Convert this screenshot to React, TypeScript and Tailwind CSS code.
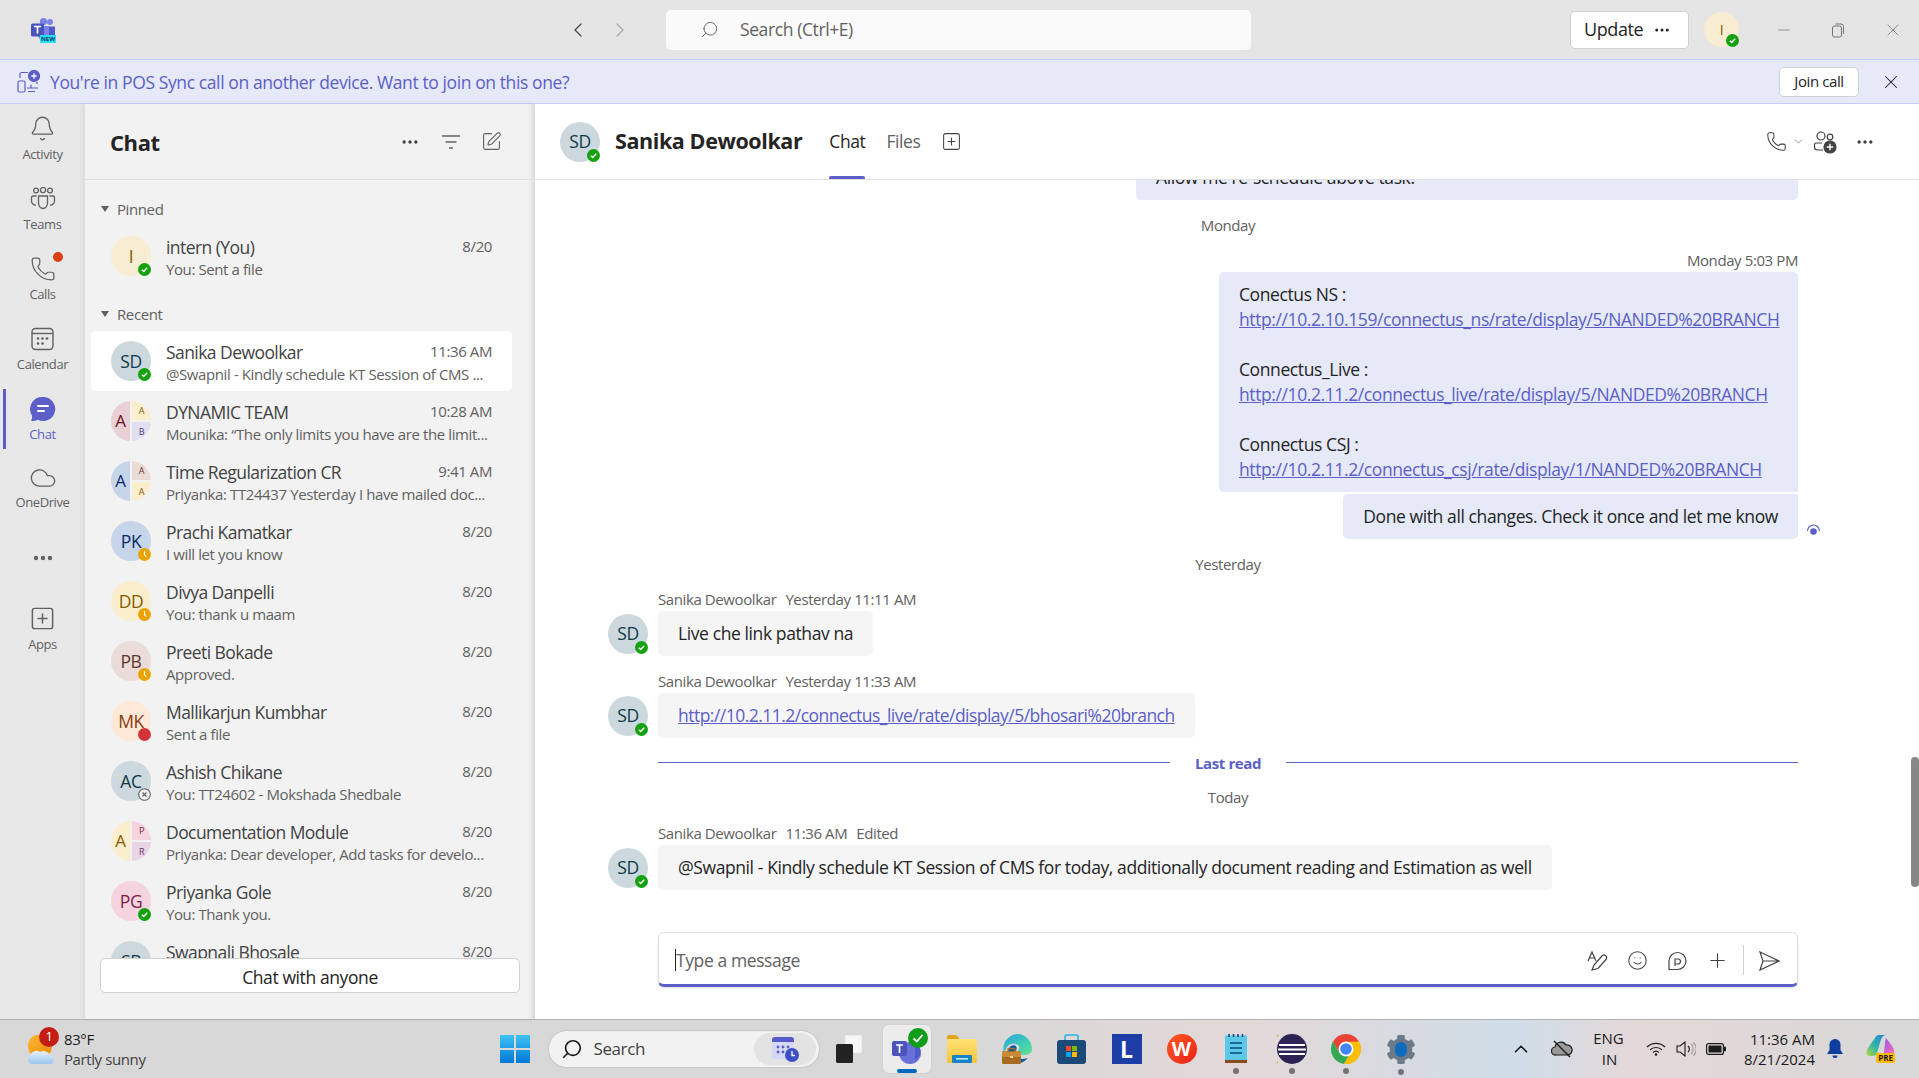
import { Bell, Phone, Cloud, SquarePlus, SquarePen, MoreHorizontal, Search, X, Minus, ChevronLeft, ChevronRight, ChevronDown, ChevronUp, Smile, Plus } from "lucide-react";
import { FaCog } from "react-icons/fa";
import type { ReactNode } from "react";

function Status({ kind, size = "w-[13px] h-[13px]" }: { kind: string; size?: string }) {
  return (
    <svg viewBox="0 0 13 13" className={`absolute right-0 bottom-0 ${size}`}>
      {kind === "ok" && (
        <>
          <circle cx="6.5" cy="6.5" r="6.5" fill="#13a10e" />
          <path d="M3.8 6.7 L5.7 8.5 L9.2 4.8" fill="none" stroke="#fff" strokeWidth="1.4" />
        </>
      )}
      {kind === "away" && (
        <>
          <circle cx="6.5" cy="6.5" r="6.5" fill="#eaa300" />
          <path d="M6.5 3 V6.8 L8.3 8.6" fill="none" stroke="#fff" strokeWidth="1.2" />
        </>
      )}
      {kind === "busy" && <circle cx="6.5" cy="6.5" r="6.5" fill="#d13438" />}
      {kind === "off" && (
        <>
          <circle cx="6.5" cy="6.5" r="5.8" fill="#f2f2f2" stroke="#616161" strokeWidth="1.1" />
          <path d="M4.5 4.5 L8.5 8.5 M8.5 4.5 L4.5 8.5" stroke="#616161" strokeWidth="1.1" />
        </>
      )}
    </svg>
  );
}

function Avatar({ text, bg, fg, status }: { text: string; bg: string; fg: string; status: string }) {
  return (
    <div className={`relative w-10 h-10 shrink-0 rounded-full flex items-center justify-center text-[17.5px] font-medium ${bg} ${fg}`}>
      {text}
      <Status kind={status} />
    </div>
  );
}

function GroupAvatar({ a, aBg, aFg, b, bBg, bFg, c, cBg, cFg }: { a: string; aBg: string; aFg: string; b: string; bBg: string; bFg: string; c: string; cBg: string; cFg: string }) {
  return (
    <div className="w-10 h-10 shrink-0 rounded-full overflow-hidden flex gap-[2px]">
      <div className={`w-[19px] flex items-center justify-center text-[17px] font-medium ${aBg} ${aFg}`}>{a}</div>
      <div className="w-[19px] flex flex-col gap-[2px]">
        <div className={`h-[19px] flex items-center justify-center text-[9px] ${bBg} ${bFg}`}>{b}</div>
        <div className={`h-[19px] flex items-center justify-center text-[9px] ${cBg} ${cFg}`}>{c}</div>
      </div>
    </div>
  );
}

const SD = () => <Avatar text="SD" bg="bg-[#ccd8de]" fg="text-[#0f3a48]" status="ok" />;

const rows: { name: string; sub: string; time: string; av: ReactNode; sel?: boolean }[] = [
  { name: "Sanika Dewoolkar", sub: "@Swapnil - Kindly schedule KT Session of CMS ...", time: "11:36 AM", av: <SD />, sel: true },
  { name: "DYNAMIC TEAM", sub: "Mounika: “The only limits you have are the limit...", time: "10:28 AM", av: <GroupAvatar a="A" aBg="bg-[#e8d0d4]" aFg="text-[#6b1020]" b="A" bBg="bg-[#fbeecd]" bFg="text-[#835b00]" c="B" cBg="bg-[#e2dff0]" cFg="text-[#4b3f8a]" /> },
  { name: "Time Regularization CR", sub: "Priyanka: TT24437 Yesterday I have mailed doc...", time: "9:41 AM", av: <GroupAvatar a="A" aBg="bg-[#c7d5ea]" aFg="text-[#0b2a6b]" b="A" bBg="bg-[#ecdcd8]" bFg="text-[#63352a]" c="A" cBg="bg-[#fbeecd]" cFg="text-[#835b00]" /> },
  { name: "Prachi Kamatkar", sub: "I will let you know", time: "8/20", av: <Avatar text="PK" bg="bg-[#c7d5ea]" fg="text-[#0b2a6b]" status="away" /> },
  { name: "Divya Danpelli", sub: "You: thank u maam", time: "8/20", av: <Avatar text="DD" bg="bg-[#fbeecd]" fg="text-[#835b00]" status="away" /> },
  { name: "Preeti Bokade", sub: "Approved.", time: "8/20", av: <Avatar text="PB" bg="bg-[#eadcd8]" fg="text-[#63352a]" status="away" /> },
  { name: "Mallikarjun Kumbhar", sub: "Sent a file", time: "8/20", av: <Avatar text="MK" bg="bg-[#fde9d5]" fg="text-[#8a3a10]" status="busy" /> },
  { name: "Ashish Chikane", sub: "You: TT24602 - Mokshada Shedbale", time: "8/20", av: <Avatar text="AC" bg="bg-[#cdd9de]" fg="text-[#0f3a48]" status="off" /> },
  { name: "Documentation Module", sub: "Priyanka: Dear developer, Add tasks for develo...", time: "8/20", av: <GroupAvatar a="A" aBg="bg-[#fbeecd]" aFg="text-[#835b00]" b="P" bBg="bg-[#f5d4e0]" bFg="text-[#7d1d45]" c="R" cBg="bg-[#e8d5e5]" cFg="text-[#6b2a66]" /> },
  { name: "Priyanka Gole", sub: "You: Thank you.", time: "8/20", av: <Avatar text="PG" bg="bg-[#f5d4e0]" fg="text-[#7d1d45]" status="ok" /> },
  { name: "Swapnali Bhosale", sub: "", time: "8/20", av: <Avatar text="SB" bg="bg-[#ccd8de]" fg="text-[#0f3a48]" status="ok" /> },
];

function Row({ name, sub, time, av, sel }: { name: string; sub: string; time: string; av: ReactNode; sel?: boolean }) {
  return (
    <div className={`ml-[6px] mr-[23px] h-[60px] shrink-0 flex items-start gap-[15px] pl-5 pr-5 pt-[10px] rounded-[5px] ${sel ? "bg-white" : ""}`}>
      {av}
      <div className="flex-1 min-w-0">
        <div className="flex justify-between h-6 leading-[22px] text-[17.5px] text-[#424242] whitespace-nowrap">
          <span className="tracking-[-0.032em]">{name}</span>
          <span className="text-[15px] text-[#616161] -mt-[1px]">{time}</span>
        </div>
        <div className="h-5 leading-[18px] text-[15px] text-[#616161] whitespace-nowrap">{sub}</div>
      </div>
    </div>
  );
}

function RailItem({ icon, label, active, labelGap = "mt-[6px]" }: { icon: ReactNode; label: string; active?: boolean; labelGap?: string }) {
  return (
    <div className="relative h-[70px] flex flex-col items-center">
      {active && <div className="absolute left-[3px] -top-[7px] w-[3px] h-[60px] bg-[#5b5fc7]" />}
      <div className="h-6 flex items-center justify-center">{icon}</div>
      <div className={`${labelGap} h-4 leading-4 text-[13px] ${active ? "text-[#5b5fc7]" : "text-[#616161]"}`}>{label}</div>
    </div>
  );
}

const TeamsRail = () => (
  <svg width="26" height="24" viewBox="0 0 26 24" fill="none" stroke="#616161" strokeWidth="1.3" className="mt-[2px]">
    <circle cx="6" cy="3.5" r="2.4" />
    <circle cx="13" cy="3" r="2.6" />
    <circle cx="20" cy="3.5" r="2.4" />
    <path d="M8.5 9 H17.5 V16 A4.5 5.5 0 0 1 8.5 16 Z" />
    <path d="M6.5 9 H3 A1.5 1.5 0 0 0 1.5 10.5 V14 A4 4 0 0 0 6 18" />
    <path d="M19.5 9 H23 A1.5 1.5 0 0 1 24.5 10.5 V14 A4 4 0 0 1 20 18" />
  </svg>
);

const CalendarIcon = () => (
  <svg width="23" height="24" viewBox="0 0 23 24" fill="none" stroke="#616161" strokeWidth="1.4" className="mt-[1px]">
    <rect x="1" y="1.5" width="21" height="21" rx="3.5" />
    <path d="M1 6.5 H22" />
    <g fill="#616161" stroke="none">
      <circle cx="7" cy="11.5" r="1.3" /><circle cx="11.5" cy="11.5" r="1.3" /><circle cx="16" cy="11.5" r="1.3" />
      <circle cx="7" cy="16.5" r="1.3" /><circle cx="11.5" cy="16.5" r="1.3" />
    </g>
  </svg>
);

const ChatIcon = () => (
  <svg width="26" height="26" viewBox="0 0 26 26" className="mt-[1px]">
    <path d="M13 1 A12 12 0 1 1 8 23.8 C5.5 25 3 25.2 1 25 C2 23.5 2.2 21 2 19.4 A12 12 0 0 1 13 1 Z" fill="#5b5fc7" />
    <path d="M8 10 H18 M8 15 H14" stroke="#fff" strokeWidth="2" strokeLinecap="round" />
  </svg>
);

const TeamsLogo = () => (
  <svg width="26" height="24" viewBox="0 0 26 24">
    <circle cx="20" cy="5" r="3" fill="#7b83eb" />
    <circle cx="13.5" cy="4.5" r="3.6" fill="#7b83eb" />
    <path d="M17 9.5 H25 V17 A4 4 0 0 1 17 17 Z" fill="#5059c9" />
    <path d="M8 9 H19 V18 A5.5 5.5 0 0 1 8 18 Z" fill="#7b83eb" />
    <rect x="1" y="6.5" width="13" height="13" rx="1.5" fill="#4b53bc" />
    <path d="M4 9.5 H11 M7.5 9.5 V16.5" stroke="#fff" strokeWidth="1.7" />
  </svg>
);

function Bubble({ children, className = "" }: { children: ReactNode; className?: string }) {
  return <div className={`px-5 py-[10px] leading-[25px] text-[17.5px] text-[#242424] rounded-[5px] whitespace-nowrap ${className}`}>{children}</div>;
}

const Link = ({ children, className = "" }: { children: ReactNode; className?: string }) => <span className={`text-[#5b5fc7] underline ${className}`}>{children}</span>;

function Sender({ time, edited, cls }: { time: string; edited?: boolean; cls: string }) {
  return (
    <div className={`pl-[50px] h-5 leading-[18px] text-[15px] text-[#616161] flex gap-[9px] whitespace-nowrap ${cls}`}>
      <span>Sanika Dewoolkar</span>
      <span>{time}</span>
      {edited && <span>Edited</span>}
    </div>
  );
}

function Incoming({ children }: { children: ReactNode }) {
  return (
    <div className="flex items-center gap-[10px] mt-[1px]">
      <SD />
      <Bubble className="bg-[#f5f5f5]">{children}</Bubble>
    </div>
  );
}

const DateLine = ({ text, cls }: { text: string; cls: string }) => (
  <div className={`pl-[50px] h-5 leading-[18px] text-center text-[15px] text-[#616161] ${cls}`}>{text}</div>
);

export default function App() {
  return (
    <div className="w-[1919px] h-[1078px] overflow-hidden flex flex-col bg-white tracking-[-0.025em] font-['Open_Sans','Noto_Sans',sans-serif]">
      {/* title bar */}
      <div className="h-[59px] shrink-0 bg-[#e5e5e5] flex items-center pl-[30px]">
        <div className="relative w-[26px] h-[24px] -mt-[1px]">
          <TeamsLogo />
          <span className="absolute right-0 -bottom-[2px] bg-[#27e0f0] text-[#0b3a6b] text-[6px] leading-[8px] font-bold px-[1px] tracking-normal">NEW</span>
        </div>
        <ChevronLeft className="ml-[510px] text-[#424242]" size={24} strokeWidth={1.2} />
        <ChevronRight className="ml-[18px] text-[#a8a8a8]" size={24} strokeWidth={1.2} />
        <div className="ml-[34px] w-[585px] h-10 bg-[#fafafa] rounded-[5px] flex items-center pl-[34px] text-[17.5px] text-[#616161]">
          <Search size={19} strokeWidth={1.2} className="scale-x-[-1]" />
          <span className="ml-[21px]">Search (Ctrl+E)</span>
        </div>
        <div className="ml-[319px] w-[119px] h-[38px] bg-white border border-[#d1d1d1] rounded-[5px] flex items-center pl-[13px] text-[18px] text-[#242424] font-medium">
          Update
          <MoreHorizontal size={18} strokeWidth={2} className="ml-[10px]" />
        </div>
        <div className="relative ml-[15px] w-[35px] h-[35px] rounded-full bg-[#f8ecd3] text-[#835b00] text-[14px] flex items-center justify-center">
          I
          <Status kind="ok" />
        </div>
        <Minus className="ml-[36px] text-[#757575]" size={18} strokeWidth={1} />
        <svg className="ml-[37px]" width="16" height="16" viewBox="0 0 16 16" fill="none" stroke="#757575" strokeWidth="1">
          <rect x="2.5" y="4" width="9" height="11" rx="2" />
          <path d="M5.5 2 H11 A2.5 2.5 0 0 1 13.5 4.5 V12" />
        </svg>
        <X className="ml-[37px] text-[#757575]" size={20} strokeWidth={1} />
      </div>

      {/* banner */}
      <div className="h-[45px] shrink-0 bg-[#e6e9f8] border-y border-[#c5cbfa] flex items-center pl-[17px]">
        <svg width="23" height="23" viewBox="0 0 23 23" fill="none" stroke="#5b5fc7" strokeWidth="1.2">
          <rect x="1" y="11" width="7" height="11" rx="1.5" />
          <path d="M3 8 V4 A1.5 1.5 0 0 1 4.5 2.5 H11 M10 18 H21 M14 14.5 V18 M11 21.5 H18 M20 12 V14" />
          <circle cx="17" cy="6" r="5.5" fill="#5b5fc7" />
          <path d="M17 3.3 V8.7 M14.3 6 H19.7" stroke="#fff" strokeWidth="1.3" />
        </svg>
        <span className="ml-[10px] pt-[2px] text-[17.5px] text-[#5b5fc7]">You're in POS Sync call on another device. Want to join on this one?</span>
        <div className="ml-auto w-[80px] h-[30px] bg-white border border-[#d1d1d1] rounded-[5px] flex items-center justify-center text-[15px] text-[#242424]">Join call</div>
        <X className="ml-[21px] mr-[17px] text-[#242424]" size={22} strokeWidth={1.1} />
      </div>

      {/* body */}
      <div className="flex-1 min-h-0 flex">
        {/* rail */}
        <div className="w-[85px] shrink-0 bg-[#e8e8e8] pt-3">
          <RailItem label="Activity" icon={<Bell size={27} strokeWidth={1.15} className="text-[#616161]" />} />
          <RailItem label="Teams" icon={<TeamsRail />} />
          <div className="relative">
            <RailItem label="Calls" icon={<Phone size={26} strokeWidth={1.15} className="text-[#616161] mt-[1px]" />} />
            <div className="absolute left-[53px] -top-[4px] w-[10px] h-[10px] rounded-full bg-[#dc3f14]" />
          </div>
          <RailItem label="Calendar" icon={<CalendarIcon />} />
          <RailItem label="Chat" active icon={<ChatIcon />} />
          <RailItem label="OneDrive" labelGap="mt-[4px]" icon={<Cloud size={28} strokeWidth={1.15} className="text-[#616161]" />} />
          <div className="h-[44px] flex items-center justify-center">
            <MoreHorizontal size={24} strokeWidth={2.4} className="text-[#616161]" />
          </div>
          <div className="mt-[26px]">
            <RailItem label="Apps" icon={<SquarePlus size={27} strokeWidth={1.3} className="text-[#616161]" />} />
          </div>
        </div>

        {/* chat list */}
        <div className="relative w-[450px] shrink-0 bg-[#f2f2f2] flex flex-col shadow-[inset_-7px_0_6px_-5px_rgba(0,0,0,0.14),-3px_0_4px_rgba(0,0,0,0.05)]">
          <div className="h-[76px] shrink-0 border-b border-[#e0e0e0] flex items-center pl-[25px]">
            <span className="text-[22px] font-bold text-[#242424] pt-[1px]">Chat</span>
            <MoreHorizontal className="ml-[240px] text-[#424242]" size={20} strokeWidth={2} />
            <svg className="ml-[21px]" width="20" height="16" viewBox="0 0 20 16" fill="none" stroke="#616161" strokeWidth="1.3">
              <path d="M1 2 H19 M4.5 8 H15.5 M8 14 H12" />
            </svg>
            <SquarePen className="ml-[20px] text-[#616161]" size={21} strokeWidth={1.25} />
          </div>
          <div className="flex-1 min-h-0 overflow-hidden flex flex-col">
            <div className="mt-5 h-5 shrink-0 pl-4 pb-[2px] flex items-center text-[15px] text-[#616161]">
              <span className="w-0 h-0 border-x-[4px] border-x-transparent border-t-[6px] border-t-[#616161]" />
              <span className="ml-2">Pinned</span>
            </div>
            <div className="mt-[6px]">
              <Row name="intern (You)" sub="You: Sent a file" time="8/20" av={<Avatar text="I" bg="bg-[#f8ecd3]" fg="text-[#835b00]" status="ok" />} />
            </div>
            <div className="mt-[19px] h-5 shrink-0 pl-4 pb-[2px] flex items-center text-[15px] text-[#616161]">
              <span className="w-0 h-0 border-x-[4px] border-x-transparent border-t-[6px] border-t-[#616161]" />
              <span className="ml-2">Recent</span>
            </div>
            <div className="mt-[6px]">
              {rows.map((r) => (
                <Row key={r.name} {...r} />
              ))}
            </div>
          </div>
          <div className="mx-[15px] mb-[26px] h-[35px] pt-[3px] shrink-0 bg-white border border-[#d1d1d1] rounded-[5px] flex items-center justify-center text-[17.5px] font-medium text-[#242424]">
            Chat with anyone
          </div>
        </div>

        {/* main */}
        <div className="relative flex-1 min-w-0 flex flex-col bg-white">
          <div className="relative z-10 h-[76px] shrink-0 bg-white border-b border-[#e0e0e0] flex items-center pl-[25px]">
            <SD />
            <span className="ml-[15px] text-[21.5px] font-bold text-[#242424]">Sanika Dewoolkar</span>
            <div className="relative ml-[27px] h-full flex items-center text-[17.5px] font-medium text-[#242424]">
              Chat
              <div className="absolute left-0 right-0 bottom-0 h-[3px] rounded-t-[2px] bg-[#5b5fc7]" />
            </div>
            <span className="ml-[21px] text-[17.5px] text-[#616161]">Files</span>
            <SquarePlus className="ml-[21px] text-[#424242]" size={21} strokeWidth={1.2} />
            <Phone className="ml-auto text-[#424242]" size={21} strokeWidth={1.2} />
            <ChevronDown className="ml-[5px] text-[#616161]" size={13} strokeWidth={1.2} />
            <svg className="ml-[8px]" width="24" height="24" viewBox="0 0 24 24" fill="none" stroke="#424242" strokeWidth="1.2">
              <circle cx="8" cy="6" r="4" />
              <circle cx="17" cy="7" r="2.8" />
              <path d="M9 13 H3 A1.5 1.5 0 0 0 1.5 14.5 V17 A3 3 0 0 0 4.5 20 H10" />
              <circle cx="17" cy="17" r="6" fill="#424242" />
              <path d="M17 13.8 V20.2 M13.8 17 H20.2" stroke="#fff" strokeWidth="1.4" />
            </svg>
            <MoreHorizontal className="ml-[18px] mr-[44px] text-[#424242]" size={20} strokeWidth={2} />
          </div>
          <div className="flex-1 min-h-0 flex flex-col ml-[73px] mr-[121px]">
            <Bubble className="ml-[528px] -mt-[25px] bg-[#e6e9f8]">Allow me re-schedule above task.</Bubble>
            <DateLine text="Monday" cls="mt-4" />
            <div className="mt-[15px] h-5 leading-[18px] text-right text-[15px] text-[#616161]">Monday 5:03 PM</div>
            <div className="flex justify-end mt-[1px]">
              <Bubble className="bg-[#e6e9f8] w-[579px] rounded-br-none">
                <div>Conectus NS :</div>
                <Link>http://10.2.10.159/connectus_ns/rate/display/5/NANDED%20BRANCH</Link>
                <div className="h-[25px]" />
                <div>Connectus_Live :</div>
                <Link>http://10.2.11.2/connectus_live/rate/display/5/NANDED%20BRANCH</Link>
                <div className="h-[25px]" />
                <div>Connectus CSJ :</div>
                <Link>http://10.2.11.2/connectus_csj/rate/display/1/NANDED%20BRANCH</Link>
              </Bubble>
            </div>
            <div className="relative flex justify-end mt-[2px]">
              <Bubble className="bg-[#e6e9f8] rounded-tr-none">Done with all changes. Check it once and let me know</Bubble>
              <svg className="absolute -right-[23px] top-[30px]" width="15" height="13" viewBox="0 0 15 13" fill="none">
                <circle cx="7.5" cy="7.5" r="3.3" fill="#5b5fc7" />
                <path d="M1.5 7 A6 6 0 0 1 13.5 7" stroke="#5b5fc7" strokeWidth="1.2" />
              </svg>
            </div>
            <DateLine text="Yesterday" cls="mt-4" />
            <Sender time="Yesterday 11:11 AM" cls="mt-[15px]" />
            <Incoming>Live che link pathav na</Incoming>
            <Sender time="Yesterday 11:33 AM" cls="mt-4" />
            <Incoming>
              <Link className="tracking-[-0.03em]">http://10.2.11.2/connectus_live/rate/display/5/bhosari%20branch</Link>
            </Incoming>
            <div className="mt-[14px] h-5 pl-[50px] flex items-center gap-[25px]">
              <div className="flex-1 h-px bg-[#5b5fc7]" />
              <span className="text-[15px] font-bold text-[#5b5fc7] pt-[2px]">Last read</span>
              <div className="flex-1 h-px bg-[#5b5fc7]" />
            </div>
            <DateLine text="Today" cls="mt-[16px]" />
            <Sender time="11:36 AM" edited cls="mt-[16px]" />
            <Incoming>
              <span className="tracking-[-0.023em]">@Swapnil - Kindly schedule KT Session of CMS for today, additionally document reading and Estimation as well</span>
            </Incoming>
            {/* composer */}
            <div className="ml-[50px] mt-[42px] h-[55px] bg-white border border-[#e0e0e0] border-b-[3px] border-b-[#5b5fc7] rounded-[6px] shadow-sm flex items-center pl-4 pr-[17px] text-[17.5px] text-[#616161]">
              <div className="w-px h-[22px] bg-[#242424] mt-[2px]" />
              <span className="pt-[3px]">Type a message</span>
              <svg className="ml-auto mt-[4px]" width="22" height="22" viewBox="0 0 22 22" fill="none" stroke="#424242" strokeWidth="1.2">
                <path d="M1 11 L5 2 L9 11 M2.5 8 H7.5" />
                <path d="M5 20 L7 15 L15 6 A2 2 0 0 1 19 9.5 L11 18.5 Z" />
              </svg>
              <Smile className="ml-[18px] mt-[4px] text-[#424242]" size={21} strokeWidth={1.2} />
              <svg className="ml-[19px] mt-[4px]" width="20" height="20" viewBox="0 0 20 20" fill="none" stroke="#424242" strokeWidth="1.2">
                <path d="M2 19 V10 A8.5 8.5 0 1 1 10.5 18.5 H2" />
                <path d="M8 15 V8 H11 A2.5 2.5 0 0 1 11 13 H8" />
              </svg>
              <Plus className="ml-[19px] mt-[4px] text-[#424242]" size={23} strokeWidth={1.2} />
              <div className="ml-[14px] w-px h-[30px] bg-[#d1d1d1] mt-[2px]" />
              <svg className="ml-[14px] mt-[4px]" width="22" height="20" viewBox="0 0 22 20" fill="none" stroke="#424242" strokeWidth="1.2">
                <path d="M2 1 L21 10 L2 19 L5 10 Z M5 10 H21" />
              </svg>
            </div>
          </div>
          <div className="absolute right-0 top-[653px] w-2 h-[130px] rounded-full bg-[#868686]" />
        </div>
      </div>

      {/* taskbar */}
      <div className="h-[59px] shrink-0 border-t border-[#b3b3b3] bg-[linear-gradient(to_right,#d8d8d8_0%,#d8d8d8_50%,#e3d8d8_65%,#d3dce4_76%,#cfdde8_79%,#e4d8d8_85%,#d8d8d8_100%)] flex items-center text-[#1b1b1b]">
        <div className="relative ml-[27px] w-[30px] h-[30px] mt-[2px]">
          <svg width="30" height="30" viewBox="0 0 30 30">
            <defs>
              <linearGradient id="sun" x1="0" y1="0" x2="1" y2="1">
                <stop offset="0" stopColor="#fdb92e" />
                <stop offset="1" stopColor="#f08a12" />
              </linearGradient>
              <linearGradient id="cld" x1="0" y1="0" x2="0" y2="1">
                <stop offset="0" stopColor="#e8f2fc" />
                <stop offset="1" stopColor="#9cc4ee" />
              </linearGradient>
            </defs>
            <circle cx="13" cy="11" r="12" fill="url(#sun)" />
            <path d="M5 29 A4.5 4.5 0 0 1 3.5 20.5 A6 6 0 0 1 13 17 A7 7 0 0 1 23 20.5 A4.5 4.5 0 0 1 24 29 Z" fill="url(#cld)" />
          </svg>
          <div className="absolute left-[12px] -top-[8px] w-5 h-5 rounded-full bg-[#c41e12] text-white text-[13px] flex items-center justify-center">1</div>
        </div>
        <div className="ml-[7px] text-[15px] leading-5">
          <div>83°F</div>
          <div className="text-[#424242]">Partly sunny</div>
        </div>
        <svg className="ml-[354px]" width="30" height="30" viewBox="0 0 30 30">
          <defs>
            <linearGradient id="win" x1="0" y1="0" x2="0" y2="1">
              <stop offset="0" stopColor="#3ec1f3" />
              <stop offset="1" stopColor="#0078d4" />
            </linearGradient>
          </defs>
          <path d="M0 1 H14 V14 H0 Z M16 1 H30 V14 H16 Z M0 16 H14 V29 H0 Z M16 16 H30 V29 H16 Z" fill="url(#win)" />
        </svg>
        <div className="ml-[18px] w-[272px] h-[38px] rounded-full bg-[#f2f2f2] border border-[#c8c8c8] flex items-center pl-[12px] text-[17px] text-[#424242]">
          <Search size={22} strokeWidth={1.8} className="scale-x-[-1] text-[#1b1b1b]" />
          <span className="ml-[11px]">Search</span>
          <div className="ml-auto mr-[3px] w-[62px] h-[32px] rounded-full bg-[#e3e3e3] flex items-center justify-center">
            <svg width="30" height="28" viewBox="0 0 30 28">
              <rect x="2" y="2" width="22" height="22" rx="3" fill="#d5d8f5" />
              <path d="M2 5 A3 3 0 0 1 5 2 H21 A3 3 0 0 1 24 5 V7 H2 Z" fill="#5559c9" />
              <g fill="#5b5fc7"><circle cx="8" cy="12" r="1.4" /><circle cx="13" cy="12" r="1.4" /><circle cx="18" cy="12" r="1.4" /><circle cx="8" cy="17" r="1.4" /><circle cx="13" cy="17" r="1.4" /></g>
              <circle cx="22" cy="20" r="7" fill="#3d4fc4" />
              <path d="M22 16 V20.5 H25" stroke="#fff" strokeWidth="1.3" fill="none" />
            </svg>
          </div>
        </div>
        <svg className="ml-4" width="26" height="28" viewBox="0 0 26 28">
          <rect x="9" y="0" width="17" height="18" rx="1.5" fill="#f6f6f6" stroke="#e4e4e4" />
          <rect x="0" y="9" width="17" height="19" rx="1.5" fill="#222" />
        </svg>
        <div className="relative ml-[21px] w-[48px] h-[48px] rounded-[5px] bg-[#ececec] shadow-[0_0_1px_rgba(0,0,0,0.3)]">
          <svg className="absolute left-[8px] top-[14px]" width="32" height="26" viewBox="0 0 32 26">
            <circle cx="19" cy="14" r="11" fill="#6a70d9" />
            <path d="M24 4 A10 10 0 0 1 29 16 L24 22 Z" fill="#5059c9" />
            <rect x="1" y="2" width="15" height="15" rx="2" fill="#4b53bc" />
            <path d="M5 6 H12 M8.5 6 V14" stroke="#fff" strokeWidth="1.7" />
          </svg>
          <svg className="absolute right-[3px] top-[3px]" width="20" height="20" viewBox="0 0 20 20">
            <circle cx="10" cy="10" r="10" fill="#0f9d1a" />
            <path d="M5.5 10.5 L8.8 13.5 L14.5 7" fill="none" stroke="#fff" strokeWidth="1.8" />
          </svg>
          <div className="absolute bottom-0 left-[14px] w-5 h-[4px] rounded-full bg-[#0067c0]" />
        </div>
        <svg className="ml-[15px]" width="31" height="30" viewBox="0 0 31 30">
          <defs>
            <linearGradient id="fold" x1="0" y1="0" x2="0" y2="1">
              <stop offset="0" stopColor="#ffe27a" />
              <stop offset="1" stopColor="#fcc334" />
            </linearGradient>
          </defs>
          <path d="M1 3 A2 2 0 0 1 3 1 H10 L13 4 V8 H1 Z" fill="#e3a21a" />
          <rect x="1" y="5" width="30" height="24" rx="1.5" fill="url(#fold)" />
          <rect x="6" y="21" width="20" height="8" rx="1" fill="#1783c9" />
          <rect x="10" y="24" width="12" height="1.6" fill="#bfe3f7" />
        </svg>
        <svg className="ml-[25px]" width="31" height="30" viewBox="0 0 31 30">
          <defs>
            <linearGradient id="edge" x1="0" y1="0" x2="1" y2="1">
              <stop offset="0" stopColor="#2ea0e4" />
              <stop offset="0.6" stopColor="#3fd0b0" />
              <stop offset="1" stopColor="#6fe08a" />
            </linearGradient>
          </defs>
          <path d="M15 0 A15 15 0 0 1 30 15 C30 20 25 21 21 21 C17 21 15 18 17 15 C19 11 12 8 7 11 C4 13 2 18 3 22 A15 15 0 0 1 15 0 Z" fill="url(#edge)" />
          <path d="M9 12 C13 10 16 12 14 17 C12 23 17 27 26 24 C20 31 10 31 7 24 C5 19 6 14 9 12 Z" fill="#0c59a4" />
          <rect x="0" y="17" width="19" height="13" rx="1.5" fill="#a86a21" />
          <rect x="0" y="17" width="19" height="6" rx="1.5" fill="#c98a35" />
          <rect x="6" y="14.5" width="7" height="3" fill="none" stroke="#a86a21" strokeWidth="1.2" />
          <rect x="8" y="22" width="3" height="2" fill="#f8d28a" />
        </svg>
        <svg className="ml-6" width="29" height="30" viewBox="0 0 29 30">
          <path d="M8 7 V2 A1.5 1.5 0 0 1 9.5 1 H19.5 A1.5 1.5 0 0 1 21 2 V7" fill="none" stroke="#27b4e6" strokeWidth="1.6" />
          <rect x="0" y="6" width="29" height="24" rx="3" fill="#1b4a79" />
          <rect x="9" y="12" width="5" height="5" fill="#f25022" />
          <rect x="15" y="12" width="5" height="5" fill="#7fba00" />
          <rect x="9" y="18" width="5" height="5" fill="#00a4ef" />
          <rect x="15" y="18" width="5" height="5" fill="#ffb900" />
        </svg>
        <div className="ml-[26px] w-[30px] h-[30px] bg-[#1f3da6] text-white text-[23px] font-bold flex items-center justify-center tracking-normal">L</div>
        <div className="ml-[25px] w-[30px] h-[30px] rounded-full bg-[linear-gradient(135deg,#ff5a1f,#e8201c)] text-white text-[20px] font-bold flex items-center justify-center tracking-normal">W</div>
        <div className="relative ml-[27px] w-[24px]">
          <svg width="24" height="30" viewBox="0 0 24 30">
            <rect x="1" y="1.5" width="22" height="26" fill="#5cc8e8" />
            <rect x="1" y="26" width="22" height="3" fill="#8a4b1c" />
            <path d="M5 3 V0 M9.5 3 V0 M14 3 V0 M18.5 3 V0" stroke="#1b4a79" strokeWidth="1.6" />
            <path d="M6 9 H18 M6 14 H18 M6 19 H18" stroke="#1b6a96" strokeWidth="2" />
          </svg>
          <div className="absolute -bottom-[10px] left-[9px] w-[6px] h-[6px] rounded-full bg-[#737373]" />
        </div>
        <div className="relative ml-[29px] w-[30px]">
          <svg width="30" height="30" viewBox="0 0 30 30">
            <circle cx="15" cy="15" r="15" fill="#2c2255" />
            <path d="M1 1 A20 20 0 0 0 1 29" fill="none" stroke="#f7941e" strokeWidth="1.2" />
            <path d="M2 11 H28 M1 15.5 H29 M2 20 H28" stroke="#fff" strokeWidth="1.8" />
          </svg>
          <div className="absolute -bottom-[10px] left-[12px] w-[6px] h-[6px] rounded-full bg-[#737373]" />
        </div>
        <div className="relative ml-[24px] w-[30px]">
          <svg width="30" height="30" viewBox="0 0 30 30">
            <path d="M15 15 L15 0 A15 15 0 0 1 28 7.5 Z" fill="#ea4335" />
            <path d="M15 0 A15 15 0 0 0 2 7.5 L9 20 L15 15 Z" fill="#ea4335" />
            <path d="M2 7.5 A15 15 0 0 0 13 29.9 L20 18 L9 20 Z" fill="#34a853" />
            <path d="M28 7.5 A15 15 0 0 1 13 29.9 L20 18 L15 8 Z" fill="#fbbc05" />
            <circle cx="15" cy="15" r="7.5" fill="#fff" />
            <circle cx="15" cy="15" r="5.8" fill="#4285f4" />
          </svg>
          <div className="absolute -bottom-[10px] left-[12px] w-[6px] h-[6px] rounded-full bg-[#737373]" />
        </div>
        <div className="relative ml-[25px] w-[30px] flex justify-center">
          <FaCog size={31} className="text-[#6b7a86]" />
          <div className="absolute left-[9px] top-[8px] w-[12px] h-[15px] rounded-full bg-[#0f6cbd]" />
          <div className="absolute -bottom-[10px] left-[12px] w-[6px] h-[6px] rounded-full bg-[#737373]" />
        </div>
        {/* tray */}
        <ChevronUp className="ml-[94px]" size={22} strokeWidth={1.8} />
        <svg className="ml-[19px]" width="22" height="18" viewBox="0 0 22 18">
          <path d="M5 15 A4 4 0 0 1 4 7 A6 6 0 0 1 15 5 A5 5 0 0 1 17 15 Z" fill="#9a9a9a" stroke="#1b1b1b" strokeWidth="1.2" />
          <path d="M3 1 L19 17" stroke="#1b1b1b" strokeWidth="1.4" />
        </svg>
        <div className="ml-[22px] w-[30px] text-[15px] leading-[21px] text-center tracking-normal">
          <div className="-ml-[2px]">ENG</div>
          <div>IN</div>
        </div>
        <svg className="ml-[21px]" width="20" height="14" viewBox="0 0 20 14" fill="none" stroke="#1b1b1b" strokeWidth="1.2">
          <path d="M1 5 A13 13 0 0 1 19 5 M4 8 A8.5 8.5 0 0 1 16 8 M7 10.5 A4.5 4.5 0 0 1 13 10.5" />
          <circle cx="10" cy="12.5" r="1.2" fill="#1b1b1b" stroke="none" />
        </svg>
        <svg className="ml-[10px]" width="20" height="16" viewBox="0 0 20 16" fill="none" stroke="#1b1b1b" strokeWidth="1.1">
          <path d="M1 5 H4 L9 1 V15 L4 11 H1 Z" />
          <path d="M12 5 A4 4 0 0 1 12 11" />
          <path d="M15 3 A7 7 0 0 1 15 13 M17.5 1.5 A9 9 0 0 1 17.5 14.5" stroke="#9a9a9a" />
        </svg>
        <svg className="ml-[10px]" width="20" height="12" viewBox="0 0 20 12">
          <rect x="0.6" y="0.6" width="16.8" height="10.8" rx="2" fill="none" stroke="#1b1b1b" strokeWidth="1.2" />
          <rect x="2.5" y="2.5" width="13" height="7" rx="0.5" fill="#1b1b1b" />
          <rect x="18" y="3.5" width="2" height="5" rx="1" fill="#1b1b1b" />
        </svg>
        <div className="ml-auto text-[15px] leading-5 text-right tracking-normal whitespace-nowrap">
          <div>11:36 AM</div>
          <div>8/21/2024</div>
        </div>
        <svg className="ml-3" width="16" height="20" viewBox="0 0 16 20">
          <path d="M8 0 A5.5 5.5 0 0 1 13.5 6 V11 L16 15 H0 L2.5 11 V6 A5.5 5.5 0 0 1 8 0 Z M5.5 16.5 H10.5 A2.5 2.5 0 0 1 5.5 16.5 Z" fill="#0f3f9e" />
        </svg>
        <div className="relative ml-[23px] mr-[24px] w-[29px] h-[28px]">
          <svg width="29" height="24" viewBox="0 0 29 24">
            <defs>
              <linearGradient id="cop1" x1="0" y1="1" x2="1" y2="0">
                <stop offset="0" stopColor="#b6d83a" />
                <stop offset="0.45" stopColor="#2fb4a8" />
                <stop offset="1" stopColor="#1f7fe0" />
              </linearGradient>
              <linearGradient id="cop2" x1="0" y1="0" x2="1" y2="1">
                <stop offset="0" stopColor="#7f6be8" />
                <stop offset="0.6" stopColor="#d35fd0" />
                <stop offset="1" stopColor="#f0829a" />
              </linearGradient>
            </defs>
            <path d="M9 3 C10 1 11 0 13 0 H20 C17 0 15.5 3 14.5 6 L11 18 C10.5 20 9 21 7 21 H4 C1 21 0 18 1 15 C3 11 6 7 9 3 Z" fill="url(#cop1)" />
            <path d="M20 3 C22 6 27 11 28 15 C29 18 27 21 25 21 H14 C16 21 17 19.5 18 17 L19 8 C19 6 19.5 4 20 3 Z" fill="url(#cop2)" />
          </svg>
          <div className="absolute right-0 bottom-0 px-[2px] rounded-[2px] bg-[#ffb900] text-[#1b1b1b] text-[8px] leading-[10px] font-bold tracking-normal">PRE</div>
        </div>
      </div>
    </div>
  );
}
